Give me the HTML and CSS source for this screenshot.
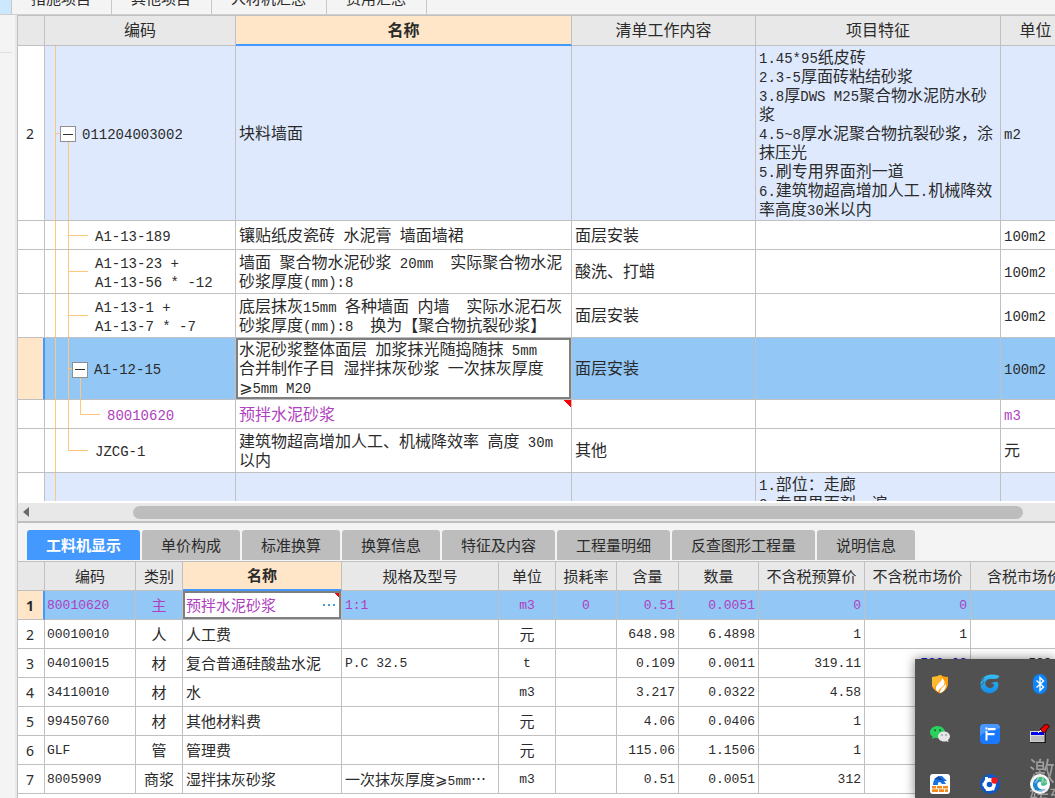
FILE: index.html
```html
<!DOCTYPE html>
<html lang="zh-CN">
<head>
<meta charset="utf-8">
<title>工料机显示</title>
<link rel="stylesheet" href="styles.css">
</head>
<body>
<nav class="top-tabs">
  <button class="top-tab current" aria-label="分部分项"></button>
  <button class="top-tab">措施项目</button>
  <button class="top-tab">其他项目</button>
  <button class="top-tab">人材机汇总</button>
  <button class="top-tab">费用汇总</button>
</nav>
<div class="workspace">
  <aside class="rail"></aside>
  <main class="main">
    <section class="pane">
      <table class="grid bill">
        <colgroup><col class="w-no"><col class="w-code"><col class="w-name"><col class="w-work"><col class="w-feat"><col></colgroup>
        <thead>
          <tr><th></th><th>编码</th><th class="active">名称</th><th>清单工作内容</th><th>项目特征</th><th>单位</th></tr>
        </thead>
        <tbody>
          <tr class="group h9">
            <td class="no">2</td>
            <td class="t-root"><button class="fold" aria-label="折叠"></button><span class="n">011204003002</span></td>
            <td>块料墙面</td><td></td>
            <td><span class="n">1.45*95</span>纸皮砖<br><span class="n">2.3-5</span>厚面砖粘结砂浆<br><span class="n">3.8</span>厚<span class="n">DWS M25</span>聚合物水泥防水砂<br>浆<br><span class="n">4.5~8</span>厚水泥聚合物抗裂砂浆，涂<br>抹压光<br><span class="n">5.</span>刷专用界面剂一道<br><span class="n">6.</span>建筑物超高增加人工<span class="n">.</span>机械降效<br>率高度<span class="n">30</span>米以内</td>
            <td class="unit"><span class="n">m2</span></td>
          </tr>
          <tr class="h1">
            <td class="no"></td><td class="t-leaf"><span class="n">A1-13-189</span></td>
            <td>镶贴纸皮瓷砖<span class="n"> </span>水泥膏<span class="n"> </span>墙面墙裙</td><td>面层安装</td><td></td><td class="unit"><span class="n">100m2</span></td>
          </tr>
          <tr class="h2">
            <td class="no"></td><td class="t-leaf"><span class="n">A1-13-23 +<br>A1-13-56 * -12</span></td>
            <td>墙面<span class="n"> </span>聚合物水泥砂浆<span class="n"> 20mm  </span>实际聚合物水泥<br>砂浆厚度<span class="n">(mm):8</span></td><td>酸洗、打蜡</td><td></td><td class="unit"><span class="n">100m2</span></td>
          </tr>
          <tr class="h2">
            <td class="no"></td><td class="t-leaf"><span class="n">A1-13-1 +<br>A1-13-7 * -7</span></td>
            <td>底层抹灰<span class="n">15mm </span>各种墙面<span class="n"> </span>内墙<span class="n">  </span>实际水泥石灰<br>砂浆厚度<span class="n">(mm):8  </span>换为【聚合物抗裂砂浆】</td><td>面层安装</td><td></td><td class="unit"><span class="n">100m2</span></td>
          </tr>
          <tr class="selected h3">
            <td class="no"></td><td class="t-branch"><button class="fold" aria-label="折叠"></button><span class="n">A1-12-15</span></td>
            <td class="focus">水泥砂浆整体面层<span class="n"> </span>加浆抹光随捣随抹<span class="n"> 5mm</span><br>合并制作子目<span class="n"> </span>湿拌抹灰砂浆<span class="n"> </span>一次抹灰厚度<br><span class="ge">⩾</span><span class="n">5mm M20</span></td><td>面层安装</td><td></td><td class="unit"><span class="n">100m2</span></td>
          </tr>
          <tr class="main-material h1">
            <td class="no"></td><td class="t-sub"><span class="n">80010620</span></td>
            <td class="flag">预拌水泥砂浆</td><td></td><td></td><td class="unit"><span class="n">m3</span></td>
          </tr>
          <tr class="h2">
            <td class="no"></td><td class="t-last"><span class="n">JZCG-1</span></td>
            <td>建筑物超高增加人工、机械降效率<span class="n"> </span>高度<span class="n"> 30m</span><br>以内</td><td>其他</td><td></td><td class="unit">元</td>
          </tr>
          <tr class="group next">
            <td class="no"></td><td class="t-next"></td><td></td><td></td>
            <td><span class="n">1.</span>部位：走廊<br><span class="n">2.</span>专用界面剂一遍</td><td></td>
          </tr>
        </tbody>
      </table>
    </section>
    <div class="scroll">
      <svg width="6" height="10" viewBox="0 0 6 10"><path d="M6 0v10L0 5z" fill="#6a6a72"/></svg>
      <div class="thumb"></div>
    </div>
    <section class="detail">
      <div class="tabs">
        <button class="tab on">工料机显示</button><button class="tab">单价构成</button><button class="tab">标准换算</button><button class="tab">换算信息</button><button class="tab">特征及内容</button><button class="tab">工程量明细</button><button class="tab">反查图形工程量</button><button class="tab">说明信息</button>
      </div>
      <div class="detail-body">
      <table class="grid mats">
        <colgroup><col class="w-no"><col class="m-code"><col class="m-kind"><col class="m-name"><col class="m-spec"><col class="m-unit"><col class="m-loss"><col class="m-cont"><col class="m-qty"><col class="m-price"><col class="m-price"><col></colgroup>
        <thead>
          <tr><th></th><th>编码</th><th>类别</th><th class="active">名称</th><th>规格及型号</th><th>单位</th><th>损耗率</th><th>含量</th><th>数量</th><th>不含税预算价</th><th>不含税市场价</th><th>含税市场价</th></tr>
        </thead>
        <tbody>
          <tr class="selected main-material"><td class="no">1</td><td class="n">80010620</td><td class="c">主</td><td class="focus flag"><div class="picker">预拌水泥砂浆<button class="more" aria-label="选择"><svg width="14" height="4" viewBox="0 0 14 4"><path d="M1 1h2v2H1zM6 1h2v2H6zM11 1h2v2h-2z" fill="#4a9ade"/></svg></button></div></td><td class="n">1:1</td><td class="c n">m3</td><td class="c n">0</td><td class="r n">0.51</td><td class="r n">0.0051</td><td class="r n">0</td><td class="r n">0</td><td></td></tr>
          <tr><td class="no">2</td><td class="n">00010010</td><td class="c">人</td><td>人工费</td><td></td><td class="c">元</td><td></td><td class="r n">648.98</td><td class="r n">6.4898</td><td class="r n">1</td><td class="r n">1</td><td></td></tr>
          <tr><td class="no">3</td><td class="n">04010015</td><td class="c">材</td><td>复合普通硅酸盐水泥</td><td class="n">P.C 32.5</td><td class="c n">t</td><td></td><td class="r n">0.109</td><td class="r n">0.0011</td><td class="r n">319.11</td><td class="r n changed">580.08</td><td class="r n">509.00</td></tr>
          <tr><td class="no">4</td><td class="n">34110010</td><td class="c">材</td><td>水</td><td></td><td class="c n">m3</td><td></td><td class="r n">3.217</td><td class="r n">0.0322</td><td class="r n">4.58</td><td></td><td></td></tr>
          <tr><td class="no">5</td><td class="n">99450760</td><td class="c">材</td><td>其他材料费</td><td></td><td class="c">元</td><td></td><td class="r n">4.06</td><td class="r n">0.0406</td><td class="r n">1</td><td></td><td></td></tr>
          <tr><td class="no">6</td><td class="n">GLF</td><td class="c">管</td><td>管理费</td><td></td><td class="c">元</td><td></td><td class="r n">115.06</td><td class="r n">1.1506</td><td class="r n">1</td><td></td><td></td></tr>
          <tr><td class="no">7</td><td class="n">8005909</td><td class="c">商浆</td><td>湿拌抹灰砂浆</td><td>一次抹灰厚度<span class="ge">⩾</span><span class="n">5mm</span>⋯</td><td class="c n">m3</td><td></td><td class="r n">0.51</td><td class="r n">0.0051</td><td class="r n">312</td><td></td><td></td></tr>
        </tbody>
      </table>
      </div>
    </section>
  </main>
</div>
<div class="tray">
  <svg viewBox="0 0 20 20"><path d="M10 1C8 2 5 3 2 3v7c0 4 3 7 8 9.500 5-2.500 8-5.500 8-9.500V3c-3 0-6-1-8-2z" fill="#ff9d0a"/><path d="M10 1C8 2 5 3 2 3v7c0 2 .6 3.500 2 5C5 9 12 9 12 1.800z" fill="#ffb92e"/><path d="M12 4c.5 4-7.500 6-6 12l2.500 2c0-3 3-4 5-6.500 2-2.500 1-5.500-1.500-7.500zM15.500 9c0 3.500-5.500 4.500-5.500 10 4-1 7-5 5.500-10z" fill="#fff"/></svg>
  <svg viewBox="0 0 20 20"><defs><linearGradient id="g" x1="0" y1="0" x2="0" y2="1"><stop offset="0" stop-color="#35bdf5"/><stop offset="1" stop-color="#168be8"/></linearGradient></defs><path d="M19.500 2C17 .5 11-.5 6.500 1.500 1 4-.5 9 1 13.500c2 5.500 9 7.500 14 4 3-2 4-5 3-9-2-1-5-.5-7 1.500 2-.5 3-.2 3 .8 0 2.500-3 4-5.500 3C5 12.500 4 8.500 7 6c2.500-2 5-.5 8-1 2-.3 3.500-1 4.500-3z" fill="url(#g)"/><path d="M0 7c2 0 3-1 4-3M0 11c2.500 0 3.500-1.500 4-4" stroke="#505050" fill="none" stroke-width=".7"/></svg>
  <svg viewBox="0 0 20 20"><rect x="3" width="14" height="20" rx="7" fill="#0a84ff"/><path d="M6.500 6.500l7 6.500L10 16.500v-13L13.500 7l-7 6.500" fill="none" stroke="#fff" stroke-width="1.400"/></svg>
  <svg viewBox="0 0 20 20"><path d="M7.500 2C3.500 2 0 4.700 0 8c0 2 1 3.500 2.700 4.600L2 15l2.600-1.300c1 .3 2 .4 3 .4 4 0 7.400-2.700 7.400-6S11.500 2 7.500 2z" fill="#2bd15d"/><circle cx="5" cy="6.200" r="1" fill="#17632c"/><circle cx="10" cy="6.200" r="1" fill="#17632c"/><path d="M14 7.500c-3.300 0-6 2.200-6 5s2.700 5 6 5c.8 0 1.500-.1 2.200-.3L18.500 18l-.5-2c1.200-1 2-2.200 2-3.500 0-2.800-2.700-5-6-5z" fill="#e6e6e6"/><circle cx="12" cy="11" r=".8" fill="#777"/><circle cx="16" cy="11" r=".8" fill="#777"/></svg>
  <svg viewBox="0 0 20 20"><rect width="20" height="20" rx="4" fill="#1a78ff"/><path d="M0 4a4 4 0 0 1 4-4h12a4 4 0 0 1 4 4C14 6 6 6 0 12z" fill="#4a98ff"/><path d="M5.500 3.500h2v2h-2zM8 4h7.500v2.300H8zM5.500 7h2v9.500h-2zM7.500 9h7v2.300h-7z" fill="#fff"/></svg>
  <svg viewBox="0 0 20 20"><path d="M0 7h16v12H0z" fill="#1a1a1a"/><path d="M0 7h14.500v11H0z" fill="#ddd"/><path d="M1 8h13v3H1z" fill="#0000ee"/><path d="M1 12h13v5.500H1z" fill="#bdbdbd"/><path d="M8 9l5-5" stroke="#fff"/><path d="M10 5l3-2 1-2 4-.5L19.500 3 17 5l-1 3-3 .5z" fill="#e60000" stroke="#300" stroke-width=".8"/></svg>
  <svg viewBox="0 0 20 20"><rect width="20" height="20" rx="3" fill="#fff"/><path d="M3 11C3 5 7 1.500 12 2l5 5h-3l2 3h-4l-2-2c-2 0-2.500 1.500-2 3z" fill="#1674e6"/><path d="M4 5l5-3 5 5-4-1z" fill="#164ba4"/><path d="M2 12h4v2.500H2zM7 12h5v2.500H7zM13 12h5v2.500h-5zM2 15.200h6V18H2zM9 15.200h5V18H9zM15 15.200h3V18h-3z" fill="#f58a1f"/></svg>
  <svg viewBox="0 0 20 20"><circle cx="10" cy="10" r="10" fill="#0e57c8"/><circle cx="9.500" cy="10.500" r="4.600" fill="none" stroke="#fff" stroke-width="3.600"/><path d="M5 3h3v3H5zM2.500 9h3v3h-3zM6 14h3v3H6zM12 13l3 2-2 2z" fill="#fff"/><circle cx="14.500" cy="6.500" r="3.200" fill="#fb1414"/></svg>
  <svg viewBox="0 0 20 20"><circle cx="10" cy="10" r="10" fill="#fff"/><path d="M3 11C3 6 6 3 10.500 3c4 0 6.500 3 6.500 5.500 0 2-1.500 3-3.500 3-1.500 0-2.500-.5-2-1.500.5-1.500-1-2.500-2.500-2C6 9 7 15 12 15.500c1.500 0 2.500-.3 4-1C14 17 12 18 9.500 17.500 5.500 17 3 14.500 3 11z" fill="#1688cf"/><path d="M9 3.300C13.500 2 17 5 17 8.500c0 2-1.500 3-3.500 3-1.500 0-2.500-.5-2-1.500C12.500 7 10 5 5.500 6 6.500 4.500 7.500 3.600 9 3.300z" fill="#42c47b"/></svg>
</div>
<div class="activate"><p class="big">激</p><p>转到</p></div>
</body>
</html>
```
FILE: styles.css
```css
* { box-sizing: border-box; }
body {
  margin: 0;
  height: 100vh;
  overflow: hidden;
  display: flex;
  flex-direction: column;
  background: #f4f4f4;
  color: #2b2b2b;
  font: 16px/19px "Liberation Sans", "Noto Sans CJK SC", sans-serif;
}
button { font: inherit; color: inherit; border: 0; padding: 0; margin: 0; background: none; }

.top-tabs {
  flex: none;
  height: 15px;
  overflow: hidden;
  display: flex;
  align-items: flex-end;
  border-bottom: 1px solid #cfcfcf;
  font-size: 15px;
}
.top-tab { height: 28px; padding: 0 20px 4px 19px; border-right: 1px solid #c8c8c8; flex: none; }
.top-tab.current { width: 12px; padding: 0; background: #cce8ff; }

.workspace { flex: 1; min-height: 0; display: flex; }
.rail {
  flex: none;
  width: 17px;
  border-right: 2px solid #e9e9e9;
  background: linear-gradient(#dedede, #dedede) 0 37px / 12px 1px no-repeat;
}
.main { flex: 1; min-width: 0; display: flex; flex-direction: column; border-left: 1px solid #c0c0c0; }
.pane {
  flex: 1 1 0;
  min-height: 0;
  overflow: hidden;
  border-top: 1px solid #c0c0c0;
  border-bottom: 2px solid #fff;
  background: #fff;
}

.grid { border-spacing: 0; table-layout: fixed; }
.grid th, .grid td {
  padding: 0 0 0 3px;
  border-right: 1px solid #c0c0c0;
  border-bottom: 1px solid #c0c0c0;
  text-align: left;
  vertical-align: middle;
  white-space: pre;
}
.grid th { padding: 0; background: #e8e8e8; text-align: center; font-weight: 400; }
.grid th.active { background: #ffe6c8; font-weight: 700; border-bottom: 2px solid #4499ff; }
.grid .n { font-family: "Liberation Mono", monospace; }
.grid span.n { line-height: 0; }
.grid .ge { font-family: "DejaVu Sans", sans-serif; line-height: 0; }
.grid .no { padding: 0 2px 0 0; text-align: center; font: 14px/19px "Noto Sans", sans-serif; background: #fff; }
.grid .selected td { background-color: #92c7f6; }
.grid .selected .no { background: #ffe6c8; border-right: 2px solid #4499ff; font-weight: 700; padding-right: 1px; }
.grid .selected .focus { background-color: #fff; box-shadow: inset 0 0 0 2px #7f7f7f; }
.grid .main-material td:not(.no) { color: #b03fc0; }
.grid .flag { background: linear-gradient(to top right, transparent 50%, #f00 50%) right top / 8px 8px no-repeat; }
.w-no { width: 27px; }

.bill { width: calc(100% + 16px); }
.w-code { width: 191px; }
.w-name { width: 336px; }
.w-work { width: 184px; }
.w-feat { width: 245px; }
.bill th { height: 30px; }
.bill .n { font-size: 14px; }
.bill .group td:not(.no) { background-color: #dee9fd; }
.h9 td { height: 175px; }
.h3 td { height: 62px; }
.h2 td { height: 44px; }
.h1 td { height: 29px; }
.next td { height: 100px; vertical-align: top; padding-top: 2px; }

/* Tree guides: vertical rails at 11, 24 and 36px, with a branch to each node */
.grid [class^="t-"] { --g: linear-gradient(#fdc87e, #fdc87e); background-repeat: no-repeat; }
.grid .t-root {
  padding-left: 15px;
  background-image: var(--g), var(--g), var(--g);
  background-position: 10px 0, 23px 100%, 10px 50%;
  background-size: 1px 100%, 1px 50%, 5px 1px;
}
.grid .t-leaf {
  padding-left: 50px;
  background-image: var(--g), var(--g), var(--g);
  background-position: 10px 0, 23px 0, 23px 50%;
  background-size: 1px 100%, 1px 100%, 20px 1px;
}
.grid .t-branch {
  padding-left: 27px;
  background-image: var(--g), var(--g), var(--g), var(--g);
  background-position: 10px 0, 23px 0, 35px 100%, 23px 50%;
  background-size: 1px 100%, 1px 100%, 1px 50%, 5px 1px;
}
.grid .t-sub {
  padding-left: 62px;
  background-image: var(--g), var(--g), var(--g), var(--g);
  background-position: 10px 0, 23px 0, 35px 0, 35px 50%;
  background-size: 1px 100%, 1px 100%, 1px 50%, 20px 1px;
}
.grid .t-last {
  padding-left: 50px;
  background-image: var(--g), var(--g), var(--g);
  background-position: 10px 0, 23px 0, 23px 50%;
  background-size: 1px 100%, 1px 50%, 20px 1px;
}
.grid .t-next { background-image: var(--g); background-position: 10px 0; background-size: 1px 100%; }
.fold {
  width: 16px;
  height: 16px;
  margin-right: 6px;
  vertical-align: middle;
  border: 1px solid #8f8f8f;
  background: linear-gradient(#333, #333) center / 10px 1px no-repeat #fff;
}

.scroll {
  flex: none;
  height: 20px;
  padding: 0 32px 0 5px;
  display: flex;
  align-items: center;
  gap: 104px;
  background: #e8e8e8;
  border-bottom: 2px solid #bfbfbf;
}
.thumb { flex: 1; height: 13px; border-radius: 7px; background: #bdbdbd; }

.detail { flex: none; padding-top: 7px; font-size: 15px; }
.tabs { display: flex; gap: 2px; padding-left: 9px; }
.tab { height: 30px; padding: 0 19px; border-radius: 3px 3px 0 0; background: #bdbdbd; flex: none; }
.tab.on { background: #4499ff; color: #fff; font-weight: 700; }
.detail-body { margin-top: 1px; border-top: 1px solid #c0c0c0; padding-bottom: 4px; background: #fff; overflow: hidden; }
.mats { width: calc(100% + 24px); }
.mats th { height: 29px; }
.mats td { height: 29px; padding: 0 3px; }
.mats td.n, .mats .n { font-size: 13px; }
.mats td:nth-child(2) { padding-left: 2px; }
.mats .c { text-align: center; }
.mats .r { text-align: right; }
.mats .changed { color: #1414dc; font-weight: 700; }
.m-code { width: 91px; }
.m-kind { width: 47px; }
.m-name { width: 159px; }
.m-spec { width: 157px; }
.m-unit { width: 57px; }
.m-loss { width: 61px; }
.m-cont { width: 62px; }
.m-qty { width: 80px; }
.m-price { width: 106px; }
.picker { display: flex; justify-content: space-between; align-items: center; }
.more { display: flex; padding-right: 2px; }

.tray {
  position: fixed;
  right: 0;
  bottom: 0;
  width: 140px;
  height: 139px;
  padding: 15px 0 0 15px;
  display: grid;
  grid-template-columns: repeat(3, 20px);
  grid-auto-rows: 20px;
  gap: 30px;
  background: #515151;
  box-shadow: 0 0 10px rgba(0, 0, 0, .5);
  overflow: hidden;
}
.tray svg { width: 20px; height: 20px; }
.activate {
  position: fixed;
  left: calc(100% - 26px);
  bottom: -12px;
  color: rgba(220, 220, 220, .55);
  font-size: 20px;
  line-height: 24px;
  white-space: nowrap;
}
.activate p { margin: 0; }
.activate .big { font-size: 26px; line-height: 28px; }
```
